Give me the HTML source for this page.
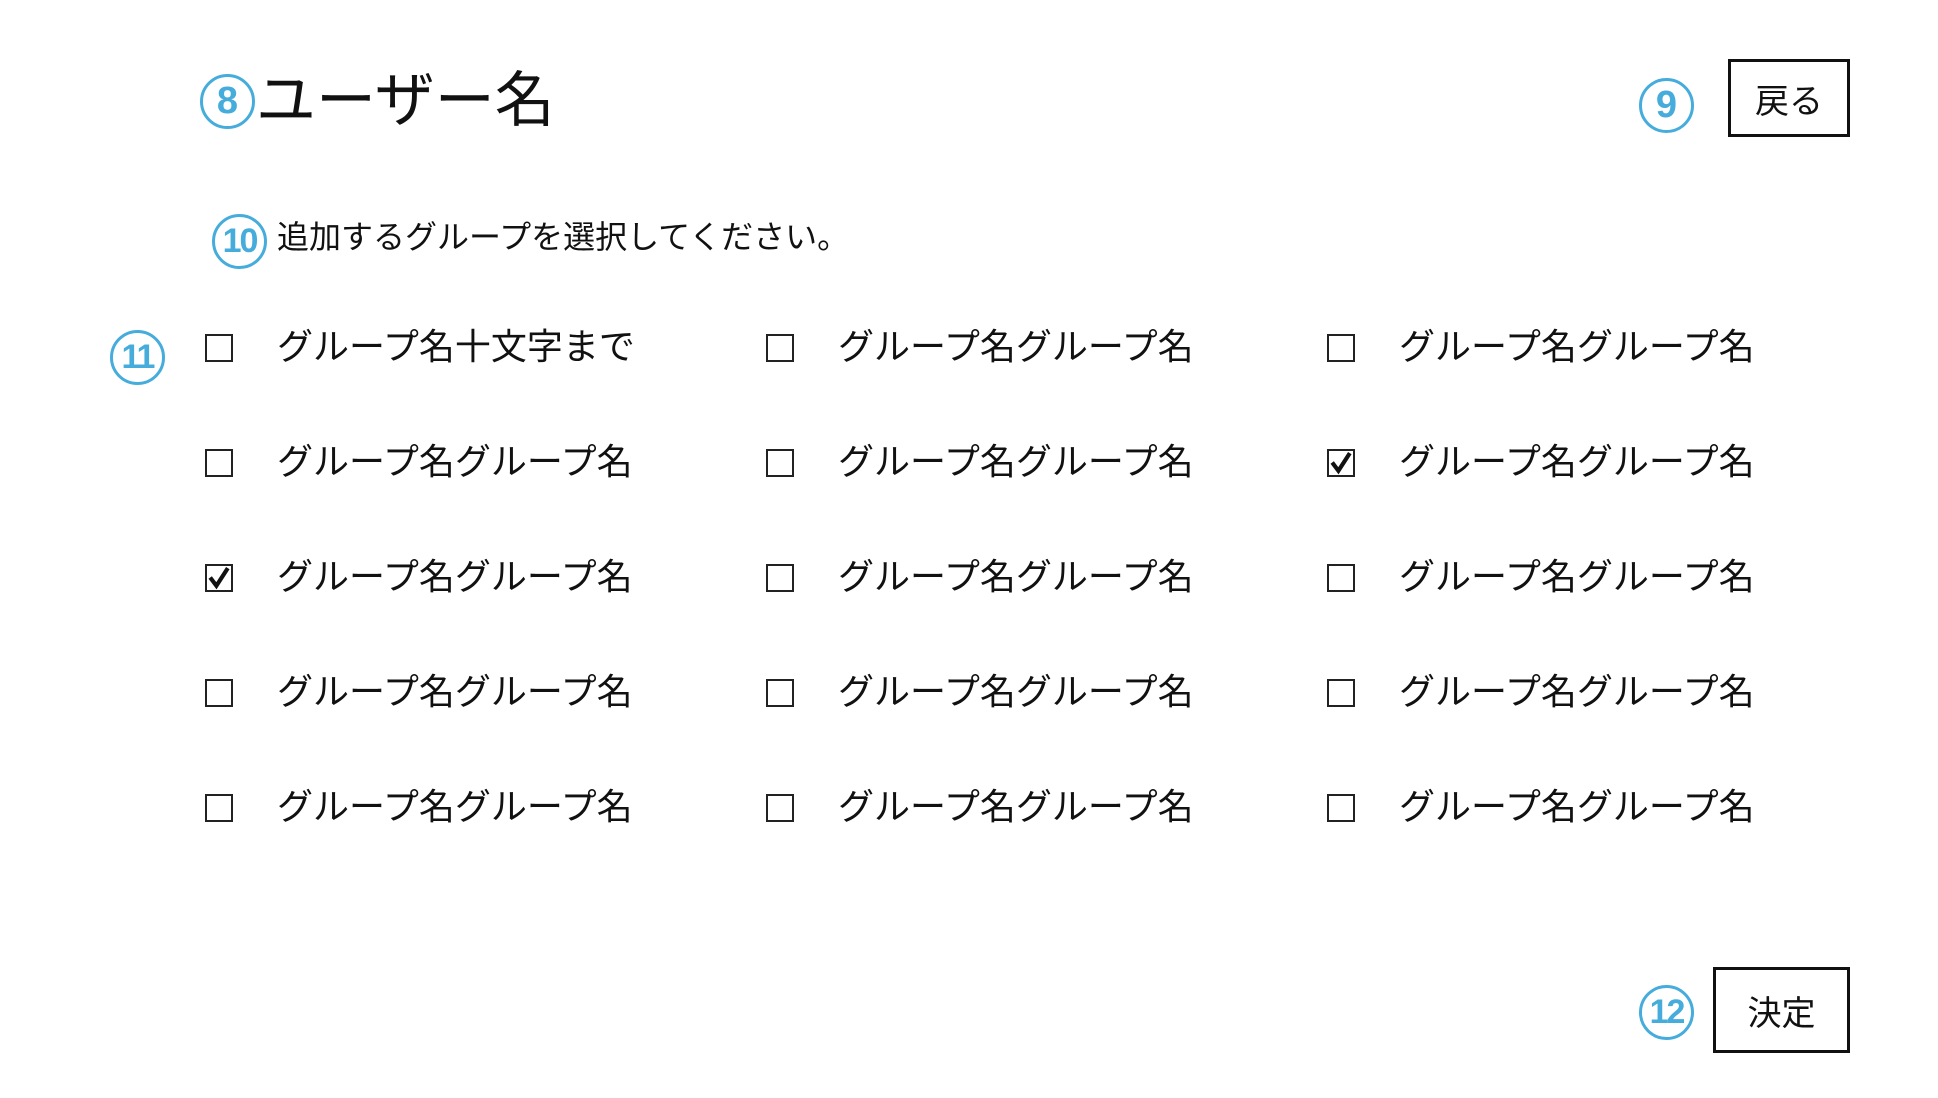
<!DOCTYPE html>
<html><head><meta charset="utf-8"><style>
body{margin:0;width:1938px;height:1098px;background:#fff;position:relative;overflow:hidden;font-family:"Liberation Sans","Noto Sans CJK JP",sans-serif;color:#111}
.c{position:absolute;border:3px solid #45acdc;border-radius:50%;color:#45acdc;box-sizing:border-box;display:flex;align-items:center;justify-content:center;font-family:"Liberation Sans",sans-serif;font-weight:bold}
.t{position:absolute;white-space:nowrap;line-height:1}
.cb{position:absolute;width:28px;height:28px;border:2px solid #222;box-sizing:border-box}
.btn{position:absolute;border:3px solid #111;box-sizing:border-box;display:flex;align-items:center;justify-content:center;font-size:34px}
</style></head><body>
<div class="c" style="left:200px;top:74px;width:55px;height:55px;font-size:38px">8</div>
<div class="t" style="left:256px;top:71px;font-size:60px">ユーザー名</div>
<div class="c" style="left:1639px;top:78px;width:55px;height:55px;font-size:38px">9</div>
<div class="btn" style="left:1728px;top:59px;width:122px;height:78px">戻る</div>
<div class="c" style="left:212px;top:214px;width:55px;height:55px;font-size:34px;letter-spacing:-2px">10</div>
<div class="t" style="left:277px;top:221px;font-size:32px">追加するグループを選択してください。</div>
<div class="c" style="left:110px;top:330px;width:55px;height:55px;font-size:34px;letter-spacing:-2px">11</div>
<div class="c" style="left:1639px;top:985px;width:55px;height:55px;font-size:34px;letter-spacing:-2px">12</div>
<div class="btn" style="left:1713px;top:967px;width:137px;height:86px">決定</div>
<div id="g"></div>
<script>
var cols=[205,766,1327],rows=[348,463,578,693,808],h='';
rows.forEach(function(y,r){cols.forEach(function(x,c){
var chk=(r==1&&c==2)||(r==2&&c==0);
h+='<div class="cb" style="left:'+x+'px;top:'+(y-14)+'px">'+(chk?'<svg width="28" height="28" viewBox="0 0 27 27" style="position:absolute;left:-2px;top:-2px"><path d="M5 13 L11 21 L22 4" stroke="#111" stroke-width="4" fill="none"/></svg>':'')+'</div>';
var txt=(r==0&&c==0)?'グループ名十文字まで':'グループ名グループ名';
h+='<div class="t" style="left:'+(x+72)+'px;top:'+(y-19)+'px;font-size:36px">'+txt+'</div>';
});});
document.getElementById('g').innerHTML=h;
</script>
</body></html>
